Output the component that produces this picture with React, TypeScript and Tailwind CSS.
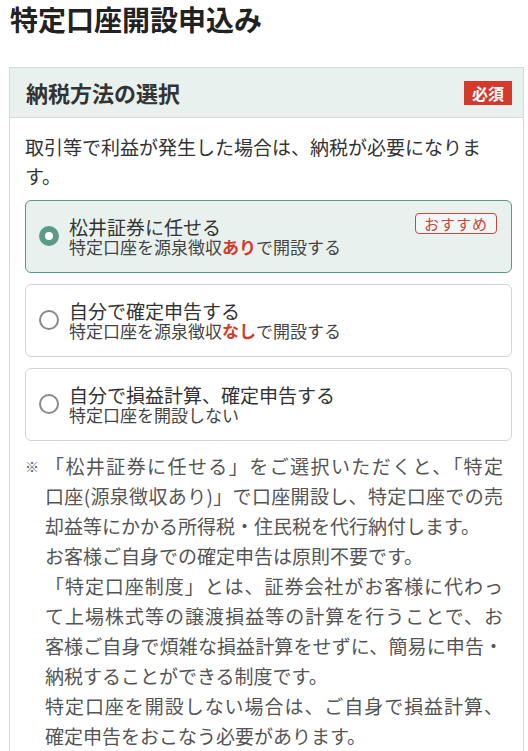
const font = { fontFamily: '"Noto Sans CJK JP", "Noto Sans", sans-serif' };

type Opt = {
  title: string;
  sub: React.ReactNode;
  selected?: boolean;
  badge?: boolean;
};

const options: Opt[] = [
  {
    title: "松井証券に任せる",
    sub: (
      <>
        特定口座を源泉徴収<span className="font-bold text-[#d33a2c]">あり</span>で開設する
      </>
    ),
    selected: true,
    badge: true,
  },
  {
    title: "自分で確定申告する",
    sub: (
      <>
        特定口座を源泉徴収<span className="font-bold text-[#d33a2c]">なし</span>で開設する
      </>
    ),
  },
  {
    title: "自分で損益計算、確定申告する",
    sub: "特定口座を開設しない",
  },
];

// note lines, true = justified (line continues in next row)
const notes: [string, boolean][] = [
  ["「松井証券に任せる」をご選択いただくと、「特定", true],
  ["口座(源泉徴収あり)」で口座開設し、特定口座での売", true],
  ["却益等にかかる所得税・住民税を代行納付します。", false],
  ["お客様ご自身での確定申告は原則不要です。", false],
  ["「特定口座制度」とは、証券会社がお客様に代わっ", true],
  ["て上場株式等の譲渡損益等の計算を行うことで、お", true],
  ["客様ご自身で煩雑な損益計算をせずに、簡易に申告・", true],
  ["納税することができる制度です。", false],
  ["特定口座を開設しない場合は、ご自身で損益計算、", true],
  ["確定申告をおこなう必要があります。", false],
];

function Radio({ on }: { on?: boolean }) {
  if (on) {
    return <span className="block h-[20px] w-[20px] shrink-0 rounded-full border-[6px] border-[#5b9a88] bg-white" />;
  }
  return <span className="block h-[20px] w-[20px] shrink-0 rounded-full border-2 border-[#8a8a8a] bg-white" />;
}

export default function App() {
  return (
    <div className="min-h-[751px] bg-white text-[#333]" style={font}>
      <h1 className="px-[10px] pt-[5px] text-[28px] font-bold leading-[28px] text-[#222]">特定口座開設申込み</h1>

      <section className="ml-[9px] mr-[4px] mt-[34px] border border-[#d6d9d8]">
        <div className="flex h-[50px] items-center justify-between border-b border-[#d6d9d8] bg-[#e9f1ee] pl-[16px] pr-[11px] pb-[2px]">
          <h2 className="text-[22px] font-bold leading-[28px] text-[#333]">納税方法の選択</h2>
          <span className="mt-[3px] flex h-[24px] items-center bg-[#d33a2c] px-[8px] text-[16px] font-bold leading-none text-white">
            必須
          </span>
        </div>

        <div className="pl-[15px] pr-[11px] pt-[14px] pb-[20px]">
          <p className="text-[19px] leading-[29px]">
            取引等で利益が発生した場合は、納税が必要になりま
            <br />
            す。
          </p>

          <div className="mt-[10px] flex flex-col gap-[11px]">
            {options.map((o) => (
              <div
                key={o.title}
                className={
                  o.selected
                    ? "relative flex items-center gap-[10px] rounded-[6px] border border-[#5b9a88] bg-[#e9f1ee] pl-[13px] pt-[15px] pb-[16px]"
                    : "relative flex items-center gap-[10px] rounded-[6px] border border-[#d5d5d5] bg-white pl-[13px] pt-[15px] pb-[16px]"
                }
              >
                <Radio on={o.selected} />
                <div>
                  <div className="text-[19px] leading-[22px] text-[#333]">{o.title}</div>
                  <div className="text-[17px] leading-[18px] text-[#444]">{o.sub}</div>
                </div>
                {o.badge && (
                  <span className="absolute right-[14px] top-[12px] flex h-[21px] items-center rounded-[4px] border-[1.5px] border-[#c9473c] bg-white/40 px-[8px] text-[15px] leading-none tracking-[1px] text-[#c9473c]">
                    おすすめ
                  </span>
                )}
              </div>
            ))}
          </div>

          <div className="mt-[10px] flex text-[19px] leading-[30px] text-[#555]">
            <span className="w-[20px] shrink-0 text-[14px]">※</span>
            <div className="w-[458px]">
              {notes.map(([t, j]) => (
                <div key={t} className={j ? "whitespace-nowrap text-justify [text-align-last:justify]" : "whitespace-nowrap"}>
                  {t}
                </div>
              ))}
            </div>
          </div>
        </div>
      </section>
    </div>
  );
}
